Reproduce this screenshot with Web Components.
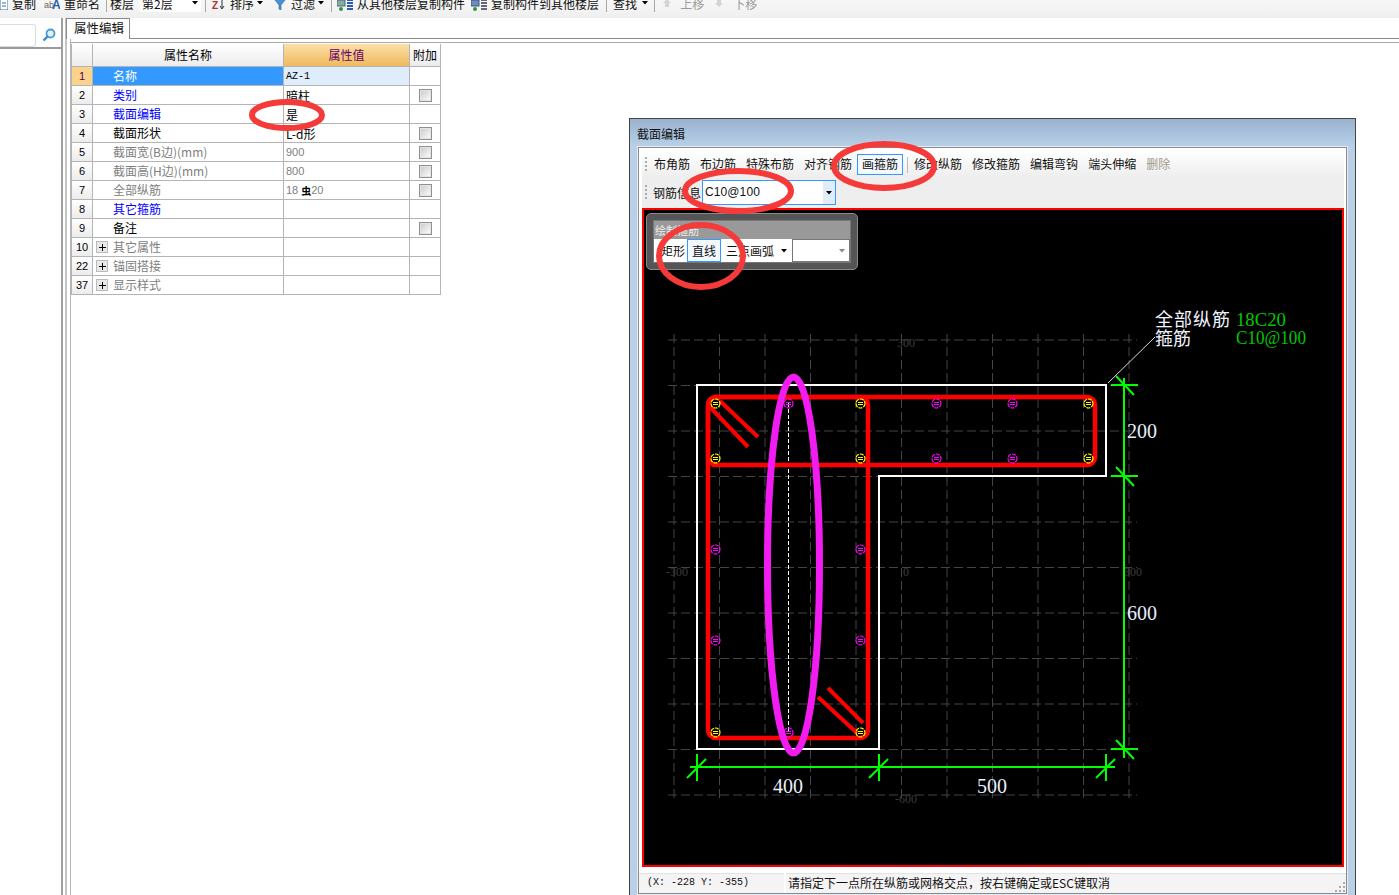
<!DOCTYPE html>
<html lang="zh">
<head>
<meta charset="utf-8">
<title>属性编辑</title>
<style>
  html, body { margin: 0; padding: 0; background: #fff; overflow: hidden; }
  body { font: 12px "Noto Sans CJK SC", "Liberation Sans", sans-serif; color: #000; }
</style>
</head>
<body>
<app-shell>
  <main-toolbar></main-toolbar>
  <side-panel slot="side"></side-panel>
  <prop-pane slot="main"><prop-table></prop-table></prop-pane>
  <section-dialog slot="window">
    <dialog-toolbar slot="tools"></dialog-toolbar>
    <section-canvas slot="canvas"><draw-panel></draw-panel></section-canvas>
    <status-bar slot="status"></status-bar>
  </section-dialog>
  <annotation-layer slot="over"></annotation-layer>
</app-shell>

<script>
const cjk = `"Noto Sans CJK SC", "Liberation Sans", sans-serif`

// small helper, every element is just a style + markup in an open shadow root
const define = (name, css, markup) => {
  customElements.define(name, class extends HTMLElement {
    connectedCallback() {
      if (this.shadowRoot) return
      this.attachShadow({ mode: 'open' })
      const html = typeof markup === 'function' ? markup() : markup
      this.shadowRoot.innerHTML = `<style>${css}</style>${html}`
    }
  })
}

define('app-shell', `
  :host { display: block; position: relative; width: 1399px; height: 895px; overflow: hidden; background: #fff; }
  .work { display: flex; height: 877px; }
`, `
  <slot></slot>
  <div class="work"><slot name="side"></slot><slot name="main"></slot></div>
  <slot name="window"></slot>
  <slot name="over"></slot>
`)

const arrow = `<svg class="arr" width="6" height="4" viewBox="0 0 6 4"><path d="M0 0h6L3 3.5z" fill="#000"/></svg>`

define('main-toolbar', `
  :host { display: block; height: 18px; overflow: hidden; background: linear-gradient(#f7f7f7, #efefef); }
  .row { display: flex; align-items: center; height: 18px; margin-top: -6px; white-space: nowrap; font: 12px ${cjk}; color: #111; }
  .sep { width: 1px; height: 18px; background: #a8a8a8; flex: none; }
  svg { flex: none; display: block; }
  .off { color: #9a9a9a; }
  .combo { display: flex; align-items: center; justify-content: space-between; width: 61px; height: 18px; background: #fff; padding: 0 3px 0 2px; box-sizing: border-box; }
`, `
  <div class="row">
    <svg width="8" height="14"><rect x="0" y="2" width="8" height="12" fill="#fff" stroke="#3a6ea5"/><path d="M2 7h4M2 10h4" stroke="#3a6ea5"/></svg>
    <span style="margin-left:4px">复制</span>
    <svg width="16" height="14" style="margin-left:8px"><text x="0" y="12" font-size="9" font-family="Liberation Sans" fill="#666">ab</text><text x="8" y="13" font-size="12" font-weight="700" font-family="Liberation Sans" fill="#2a5ea8">A</text></svg>
    <span style="margin-left:4px">重命名</span>
    <i class="sep" style="margin-left:6px"></i>
    <span style="margin-left:3px">楼层</span>
    <span class="combo" style="margin-left:6px"><span>第2层</span>${arrow}</span>
    <i class="sep" style="margin-left:4px"></i>
    <svg width="16" height="14" style="margin-left:5px"><text x="1" y="13" font-size="10" font-weight="700" font-family="Liberation Sans" fill="#a33">Z</text><path d="M11 3v9M9 10l2 3 2-3" stroke="#333" fill="none"/></svg>
    <span style="margin-left:3px">排序</span>
    <span style="margin-left:3px;display:flex">${arrow}</span>
    <svg width="14" height="14" style="margin-left:10px"><path d="M1 3h12L8 9v5l-2-1V9z" fill="#4a90d0" stroke="#2a6aa8" stroke-width=".6"/></svg>
    <span style="margin-left:4px">过滤</span>
    <span style="margin-left:3px;display:flex">${arrow}</span>
    <i class="sep" style="margin-left:7px"></i>
    <svg width="16" height="16" style="margin-left:5px"><rect x="0" y="5" width="8" height="6" fill="#8aa" stroke="#567"/><circle cx="4" cy="14" r="2" fill="#2a9a3a"/><path d="M10 5h6M10 8h6M10 11h6M10 14h6" stroke="#2a5ea8" stroke-width="2"/></svg>
    <span style="margin-left:4px">从其他楼层复制构件</span>
    <svg width="16" height="16" style="margin-left:6px"><rect x="0" y="5" width="8" height="6" fill="#6a8ac8" stroke="#456"/><circle cx="4" cy="14" r="2" fill="#2a9a3a"/><path d="M10 5h6M10 8h6M10 11h6M10 14h6" stroke="#667" stroke-width="2"/></svg>
    <span style="margin-left:4px">复制构件到其他楼层</span>
    <i class="sep" style="margin-left:7px"></i>
    <span style="margin-left:6px">查找</span>
    <span style="margin-left:5px;display:flex">${arrow}</span>
    <i class="sep" style="margin-left:6px"></i>
    <svg width="10" height="10" style="margin-left:7px"><path d="M5 1l4 4H7v4H3V5H1z" fill="#d4d4d4"/></svg>
    <span class="off" style="margin-left:8px">上移</span>
    <svg width="10" height="10" style="margin-left:10px"><path d="M5 9l4-4H7V1H3v4H1z" fill="#d4d4d4"/></svg>
    <span class="off" style="margin-left:9px">下移</span>
  </div>
`)

define('side-panel', `
  :host { display: block; flex: none; width: 71px; box-sizing: border-box; border-right: 1px solid #b4b4b4; position: relative; }
  .inner { width: 63px; height: 100%; box-sizing: border-box; border-right: 2px solid #a0a0a0; }
  .top { display: flex; align-items: center; height: 31px; border-bottom: 2px solid #9a9a9a; box-sizing: border-box; padding-top: 5px; }
  .box { width: 36px; height: 23px; box-sizing: border-box; border: 1px solid #dcdcdc; border-left: 0; border-radius: 0 3px 3px 0; background: #fff; }
  svg { margin-left: 6px; }
  .rail { position: absolute; left: 65px; top: 0; bottom: 0; width: 2px; background: #c4c4c4; }
`, `
  <div class="inner">
    <div class="top">
      <div class="box"></div>
      <svg width="14" height="14" viewBox="0 0 14 14"><circle cx="8.5" cy="5.5" r="4" fill="#dff0fb" stroke="#4a9ad0" stroke-width="1.8"/><path d="M5.5 8.5L1.5 12.5" stroke="#3a8ac0" stroke-width="2.4"/></svg>
    </div>
  </div>
  <div class="rail"></div>
`)

define('prop-pane', `
  :host { display: block; flex: 1; min-width: 0; position: relative; margin-left: -5px; }
  .tabs { height: 21px; border-bottom: 1px solid #8a8a8a; display: flex; box-sizing: border-box; }
  .tab { width: 64px; height: 21px; box-sizing: border-box; border: 1px solid #8a8a8a; border-bottom: 0; background: #fff; font: 12.500px/17px ${cjk}; padding-left: 7px; color: #111; }
  .rule { height: 3px; border-bottom: 1px solid #aaa; margin-left: 4px; }
  .body { padding: 1px 0 0 5px; }
`, `
  <div class="tabs"><div class="tab">属性编辑</div></div>
  <div class="rule"></div>
  <div class="body"><slot></slot></div>
`)

const rows = [
  ['1', '名称', 'AZ-1', 0, 'sel', 0],
  ['2', '类别', '暗柱', 1, 'blue', 0],
  ['3', '截面编辑', '是', 0, 'blue', 0],
  ['4', '截面形状', 'L-d形', 1, '', 0],
  ['5', '截面宽(B边)(mm)', '900', 1, 'gray', 0],
  ['6', '截面高(H边)(mm)', '800', 1, 'gray', 0],
  ['7', '全部纵筋', '18<b>虫</b>20', 1, 'gray', 0],
  ['8', '其它箍筋', '', 0, 'blue', 0],
  ['9', '备注', '', 1, '', 0],
  ['10', '其它属性', '', 0, 'gray', 1],
  ['22', '锚固搭接', '', 0, 'gray', 1],
  ['37', '显示样式', '', 0, 'gray', 1]
]

const rowMarkup = ([num, name, value, check, kind, plus]) => `
  <div class="c num ${kind === 'sel' ? 'cur' : ''}">${num}</div>
  <div class="c name ${kind}">${plus ? '<i class="plus"></i>' : ''}<span>${name}</span></div>
  <div class="c val ${kind === 'sel' ? 'curval' : ''} ${kind === 'gray' ? 'gray' : ''}">${value}</div>
  <div class="c att">${check ? '<i class="chk"></i>' : ''}</div>`

define('prop-table', `
  :host { display: grid; grid-template-columns: 21px 191px 126px 31px; grid-template-rows: 23px; grid-auto-rows: 19px; width: 369px; box-sizing: content-box;
    border-left: 1px solid #b4b4b4; font: 12px ${cjk}; color: #000; }
  .c { box-sizing: border-box; border-right: 1px solid #b4b4b4; border-bottom: 1px solid #b4b4b4; display: flex; align-items: center; white-space: nowrap; overflow: hidden; line-height: 18px; }
  .h { justify-content: center; background: linear-gradient(#fff, #ececec); }
  .h.v { background: linear-gradient(#fbdfa8, #efba5c); color: #660066; }
  .num { justify-content: center; font: 11px "Liberation Sans", sans-serif; background: linear-gradient(#fff, #ececec); }
  .num.cur { background: #fbd38d; color: #5a0050; }
  .name { padding-left: 20px; position: relative; }
  .sel { background: #3399ff; color: #fff; }
  .blue { color: #0000ff; }
  .gray { color: #808080; }
  .val { padding-left: 2px; font: 12px ${cjk}; }
  .val.gray { font: 11px "Liberation Sans", ${cjk}; }
  .curval { background: #deecfb; font: 10px "Liberation Mono", monospace; }
  .val b { color: #000; font: 700 10px ${cjk}; margin: 0 0 0 3px; }
  .att { justify-content: center; }
  .chk { width: 13px; height: 13px; box-sizing: border-box; border: 1px solid #909090; box-shadow: inset 0 0 0 1px #e4e4e4; background: linear-gradient(135deg, #c8c8c8, #fff); }
  .plus { position: absolute; left: 3px; top: 3px; width: 12px; height: 12px; box-sizing: border-box; border: 1px solid #bbb; background:
    linear-gradient(#000, #000) center / 7px 1px no-repeat, linear-gradient(#000, #000) center / 1px 7px no-repeat, #e8e8e8; }
`, () => `
  <div class="c h"></div>
  <div class="c h">属性名称</div>
  <div class="c h v">属性值</div>
  <div class="c h">附加</div>
  ${rows.map(rowMarkup).join('')}
`)

define('section-dialog', `
  :host { display: block; position: absolute; left: 629px; top: 118px; width: 727px; height: 777px; box-sizing: border-box;
    border: 1px solid #444; border-bottom: 0; background: linear-gradient(#9ab2cf, #b9d0e8 28px); }
  .title { height: 28px; box-sizing: border-box; padding: 7px 0 0 7px; font: 12px/16px ${cjk}; color: #111; }
  .client { margin: 0 8px; height: 747px; box-sizing: border-box; border: 1px solid #8a8a8a; background: #fff; outline: 1px solid #e4ecf4; display: flex; flex-direction: column; padding: 3px 2px 0 3px; }
`, `
  <div class="title">截面编辑</div>
  <div class="client">
    <slot name="tools"></slot>
    <slot name="canvas"></slot>
    <slot name="status"></slot>
  </div>
`)

const grip = `<i class="grip"></i>`

define('dialog-toolbar', `
  :host { display: block; height: 57px; flex: none; background: linear-gradient(#fff, #eeeeee 26px, #eeeeee); border-radius: 3px 3px 0 0; font: 12px ${cjk}; color: #111; }
  .line { display: flex; align-items: center; white-space: nowrap; padding-left: 3px; }
  .one { height: 27px; }
  .two { height: 27px; margin-top: 1px; }
  .grip { flex: none; width: 2px; height: 16px; margin-right: 2px; background: repeating-linear-gradient(#aaa 0 2px, transparent 2px 4px); }
  .it { padding: 0 5px; height: 21px; line-height: 20px; box-sizing: border-box; }
  .it.on { border: 1px solid #3399ff; line-height: 18px; padding: 0 4px; background: #f4f9ff; }
  .it.off { color: #a09a8a; }
  .sep { width: 1px; height: 16px; background: #bbb; margin: 0 1px 0 4px; }
  .lbl { margin: 0 1px 0 4px; }
  .combo { width: 134px; height: 25px; box-sizing: border-box; border: 1px solid #3399ff; background: #fff; display: flex; align-items: stretch; justify-content: space-between; font: 12px/22px "Liberation Sans", sans-serif; letter-spacing: .1px; padding-left: 2px; }
  .drop { width: 12px; background: #e0ecf8; display: flex; align-items: center; justify-content: center; }
`, `
  <div class="line one">
    ${grip}
    <span class="it">布角筋</span><span class="it">布边筋</span><span class="it">特殊布筋</span><span class="it">对齐钢筋</span>
    <span class="it on">画箍筋</span><i class="sep"></i>
    <span class="it">修改纵筋</span><span class="it">修改箍筋</span><span class="it">编辑弯钩</span><span class="it">端头伸缩</span><span class="it off">删除</span>
  </div>
  <div class="line two">
    ${grip}
    <span class="lbl">钢筋信息</span>
    <div class="combo"><span>C10@100</span><span class="drop">${arrow}</span></div>
  </div>
`)

define('draw-panel', `
  :host { display: block; position: absolute; left: 2px; top: 3px; width: 212px; height: 57px; box-sizing: border-box; border-radius: 5px; background: #555; border: 1px solid #888; padding: 6px; font: 12px ${cjk}; color: #111; }
  .box { background: #fff; height: 43px; border: 1px solid #777; box-sizing: border-box; }
  .head { height: 18px; background: #999; color: #eee; font-size: 11px; line-height: 18px; padding-left: 1px; }
  .body { display: flex; align-items: center; height: 23px; }
  .it { padding: 0 4px; height: 23px; line-height: 21px; box-sizing: border-box; border: 1px solid transparent; white-space: nowrap; }
  .it:first-child { padding: 0 1px 0 6px; }
  .it.on { border-color: #3399ff; background: #f2f8ff; }
  .cb { width: 58px; height: 23px; box-sizing: border-box; border: 1px solid #777; display: flex; align-items: center; justify-content: flex-end; padding-right: 4px; }
  .a { margin: 0 5px 0 2px; display: flex; }
  .cb svg path { fill: #888; }
`, `
  <div class="box">
    <div class="head">绘制箍筋</div>
    <div class="body">
      <span class="it">矩形</span><span class="it on">直线</span><span class="it">三点画弧</span><span class="a">${arrow}</span>
      <span class="cb">${arrow}</span>
    </div>
  </div>
`)

// grid of the section drawing, 45.5px per 100mm
const gridX = Array.from({ length: 11 }, (_, i) => 674 + i * 45.5)
const gridY = Array.from({ length: 11 }, (_, i) => 340 + i * 45.5)

const yellowBars = [[715, 403], [860, 403], [715, 458], [860, 458], [1088, 403], [1088, 458], [715, 732], [860, 732]]
const pinkBars = [[788, 403], [936, 403], [1012, 403], [936, 458], [1012, 458], [715, 549], [860, 549], [715, 640], [860, 640], [788, 732]]

const bar = ([x, y], color) => `<g stroke="${color}" fill="none"><circle cx="${x + .5}" cy="${y + .5}" r="4.500" stroke-width="1.200" stroke-dasharray="4 1"/><path d="M${x - 2} ${y - .5}h5M${x - 2} ${y + 1.5}h5"/></g>`

const dimTick = (x, y) => `<path d="M${x - 10} ${y + 10}L${x + 9} ${y - 9}"/>`

define('section-canvas', `
  :host { display: block; position: relative; flex: none; width: 702px; height: 659px; box-sizing: border-box; border: 2px solid #ff0000; background: #000; }
  svg { position: absolute; left: -2px; top: -2px; display: block; }
  text { font-family: "Liberation Serif", ${cjk}; }
  .cn { font-family: ${cjk}; }
`, () => `
  <svg width="702" height="659" viewBox="642 208 702 659">
    <g stroke="#444" stroke-dasharray="9 4" fill="none">
      ${gridX.map(x => `<path d="M${x} 334V800"/>`).join('')}
      ${gridY.map(y => `<path d="M668 ${y}H1137"/>`).join('')}
    </g>
    <g fill="#3c3c3c" font-size="12">
      <text x="897" y="347">300</text>
      <text x="666" y="576">-300</text>
      <text x="903" y="576">0</text>
      <text x="1124" y="576">300</text>
      <text x="895" y="803">-600</text>
    </g>
    <path d="M697 385H1106V476H879V749H697Z" fill="none" stroke="#fff" stroke-width="2"/>
    <path d="M1108 383L1155 337" stroke="#ddd"/>
    <path d="M788.500 403V732" stroke="#fff" stroke-dasharray="4 2"/>
    <g fill="none" stroke="#ff0000" stroke-width="4.500">
      <rect x="708" y="397" width="160" height="341" rx="8"/>
      <rect x="708" y="397" width="387" height="68" rx="8"/>
    </g>
    <path d="M720 401L758 437M710 407L748 447M828 688L863 723M818 697L857 733" stroke="#ff0000" stroke-width="4"/>
    ${yellowBars.map(b => bar(b, '#ffff00')).join('')}
    ${pinkBars.map(b => bar(b, '#ff00ff')).join('')}
    <g stroke="#00ff00" stroke-width="2" fill="none">
      <path d="M1124 378V758M1111 385H1138M1111 476H1138M1111 749H1138"/>
      <path d="M1116 376L1134 395M1116 467L1134 486M1116 740L1134 759"/>
      <path d="M690 767H1115M697 754V781M879 754V781M1106 754V781"/>
      ${dimTick(697, 768)}${dimTick(879, 768)}${dimTick(1106, 768)}
    </g>
    <g fill="#e8f0ff" font-size="20">
      <text x="1127" y="438">200</text>
      <text x="1127" y="620">600</text>
      <text x="773" y="793">400</text>
      <text x="977" y="793">500</text>
    </g>
    <g fill="#f0f4ff" font-size="18" class="cn">
      <text class="cn" x="1155" y="326" textLength="75">全部纵筋</text>
      <text class="cn" x="1155" y="345">箍筋</text>
    </g>
    <g fill="#00c800" font-size="19">
      <text x="1236" y="326" textLength="50" lengthAdjust="spacingAndGlyphs">18C20</text>
      <text x="1236" y="344" textLength="70" lengthAdjust="spacingAndGlyphs">C10@100</text>
    </g>
  </svg>
  <slot></slot>
`)

define('status-bar', `
  :host { display: flex; flex: none; height: 20px; margin: 6px -2px 0 -3px; gap: 2px; font-size: 12px; color: #111; }
  .a, .b { box-sizing: border-box; background: #f4f4f4; height: 20px; border-top: 1px solid #e2e2e2; white-space: nowrap; }
  .a { width: 145px; padding-left: 8px; font: 10px/18px "Liberation Mono", monospace; }
  .b { flex: 1; padding-left: 2px; font: 12px/18px ${cjk}; position: relative; }
  .dots { position: absolute; right: 1px; bottom: 1px; }
`, `
  <div class="a">(X: -228 Y: -355)</div>
  <div class="b">请指定下一点所在纵筋或网格交点，按右键确定或ESC键取消
    <svg class="dots" width="10" height="10" fill="#aaa"><path d="M8 0h2v2H8zM4 4h2v2H4zM8 4h2v2H8zM0 8h2v2H0zM4 8h2v2H4zM8 8h2v2H8z"/></svg>
  </div>
`)

// hand drawn red marks on top of the screenshot
define('annotation-layer', `
  :host { display: block; position: absolute; left: 0; top: 0; width: 1399px; height: 895px; pointer-events: none; }
  svg { display: block; }
`, `
  <svg width="1399" height="895" fill="none">
    <g stroke="#f53a3a" stroke-width="6">
      <ellipse cx="287" cy="115" rx="35" ry="13"/>
      <ellipse cx="884" cy="166" rx="50" ry="22"/>
      <ellipse cx="738" cy="191" rx="53" ry="20"/>
      <ellipse cx="701" cy="256" rx="42" ry="31"/>
    </g>
    <ellipse cx="793.500" cy="565" rx="26" ry="188" stroke="#f01cf0" stroke-width="7"/>
  </svg>
`)
</script>
</body>
</html>
